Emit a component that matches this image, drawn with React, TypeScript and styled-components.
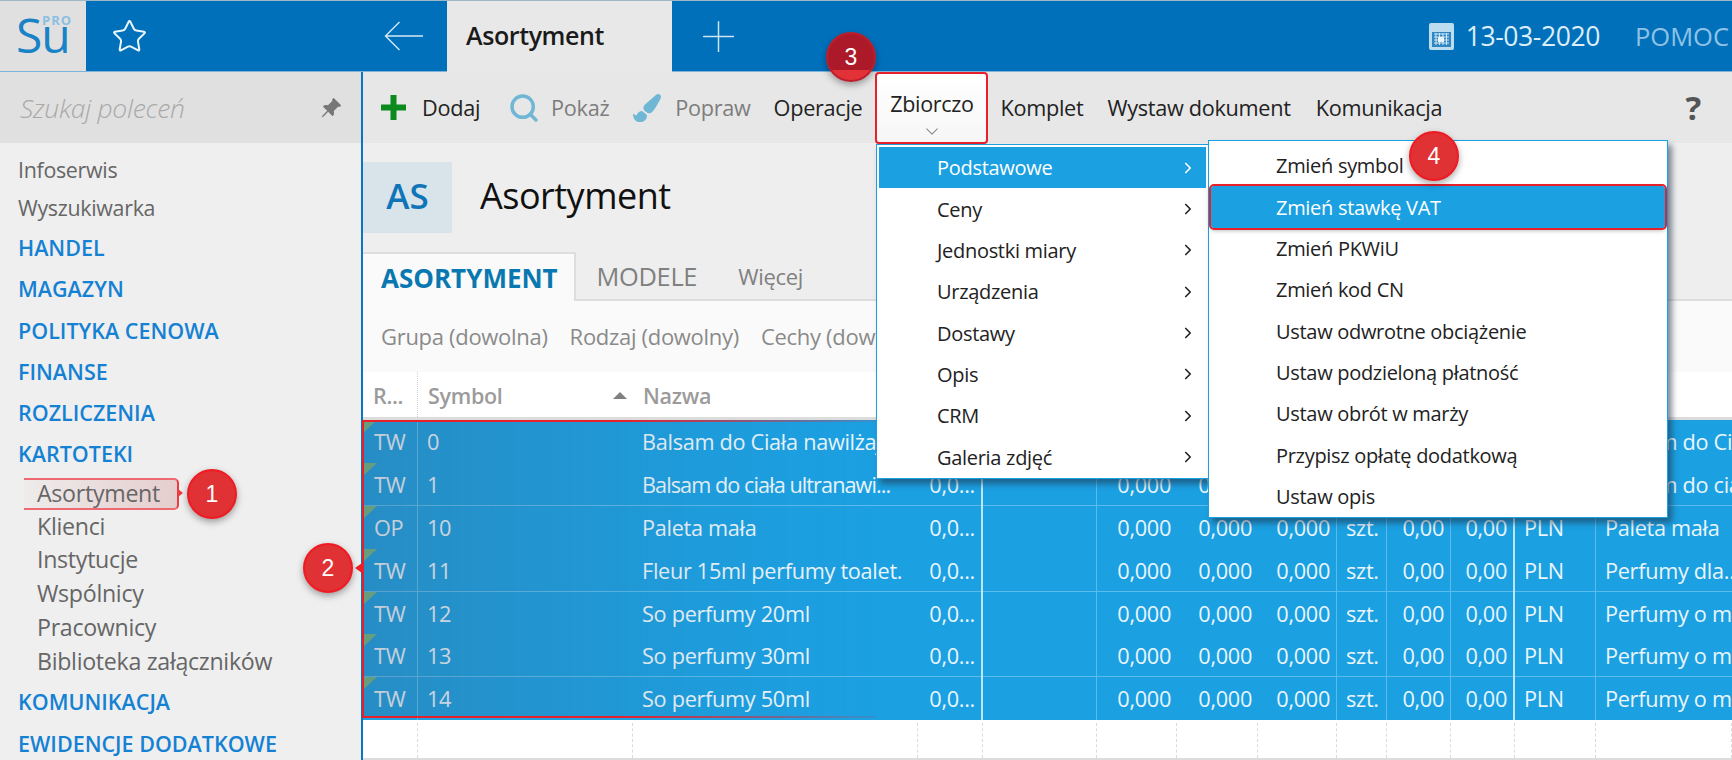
import React from "react";
import styled, { createGlobalStyle } from "styled-components";
import { Star, Search, Plus, ChevronDown, ChevronRight } from "lucide-react";
import { BsPinAngleFill } from "react-icons/bs";
import { FaPaintBrush } from "react-icons/fa";

const GlobalStyle = createGlobalStyle`
  html, body {
    margin: 0;
    padding: 0;
    background: #fff;
  }
  body {
    font-family: "Open Sans", "Liberation Sans", sans-serif;
    overflow: hidden;
  }
`;

const Page = styled.div`
  position: relative;
  width: 1732px;
  height: 760px;
  overflow: hidden;
  display: flex;
  flex-direction: column;
  font-size: 19px;
  letter-spacing: -0.3px;
`;

/* top bar */
const TopBar = styled.header`
  height: 72px;
  flex: none;
  display: flex;
  align-items: stretch;
  background: #0070bb;
  border-top: 1px solid #9fb8c8;
  border-bottom: 1px solid #7fb4da;
  box-sizing: border-box;
  color: #fff;
`;

const LogoBox = styled.div`
  width: 86px;
  background: #e0e0e0;
  position: relative;
  display: flex;
  padding: 5px 0 0 16px;
  box-sizing: border-box;
`;

const LogoSu = styled.span`
  font-size: 48px;
  line-height: 58px;
  font-weight: 500;
  color: #1a82c6;
  letter-spacing: -1px;
`;

const LogoPro = styled.span`
  position: absolute;
  left: 42px;
  top: 12px;
  font-size: 13px;
  line-height: 14px;
  font-weight: 700;
  letter-spacing: 1px;
  color: #8dbfe0;
`;

const FavArea = styled.div`
  width: 361px;
  display: flex;
  align-items: center;
  justify-content: space-between;
  padding: 0 24px 0 25px;
  box-sizing: border-box;
`;

const ActiveTab = styled.div`
  width: 225px;
  background: #e8e8e8;
  margin-bottom: -1px;
  color: #1a1a1a;
  font-size: 25px;
  font-weight: 600;
  line-height: 69px;
  padding-left: 19px;
  box-sizing: border-box;
  letter-spacing: -0.4px;
`;

const NewTab = styled.div`
  display: flex;
  align-items: center;
  padding-left: 21px;
  color: #cfe4f3;
`;

const TopRight = styled.div`
  margin-left: auto;
  display: flex;
  align-items: center;
  white-space: nowrap;
  margin-right: 3px;
`;

const DateText = styled.span`
  font-size: 26.5px;
  color: #dceefa;
  margin-left: 12px;
  letter-spacing: -0.4px;
`;

const HelpLink = styled.span`
  font-size: 25.5px;
  color: #8fc2e5;
  margin-left: 35px;
  letter-spacing: 0;
`;

/* body */
const Body = styled.div`
  flex: 1;
  display: flex;
  min-height: 0;
`;

const Sidebar = styled.aside`
  width: 363px;
  flex: none;
  background: #efefef;
  border-right: 2px solid #0a76bd;
  box-sizing: border-box;
`;

const SearchBox = styled.div`
  height: 71px;
  background: #e0e0e0;
  display: flex;
  align-items: center;
  justify-content: space-between;
  padding: 1px 19px 0 20px;
  color: #a9a9a9;
  font-style: italic;
  font-size: 26.5px;
  font-weight: 300;
  box-sizing: border-box;
`;

const NavList = styled.nav`
  display: flex;
  flex-direction: column;
  padding: 8px 0 0 18px;
`;

const NavLink = styled.div`
  height: 38px;
  line-height: 38px;
  color: #666;
  font-size: 21.4px;
  white-space: nowrap;
`;

const NavGroup = styled.div`
  height: 41.3px;
  line-height: 41.3px;
  color: #1581d3;
  font-size: 21.5px;
  font-weight: 600;
  letter-spacing: 0;
  white-space: nowrap;
`;

const SubList = styled.div`
  display: flex;
  flex-direction: column;
  padding: 35px 0 3px 19px;
`;

const SubLink = styled.div`
  height: 33.7px;
  line-height: 33.7px;
  color: #666;
  font-size: 23.2px;
  white-space: nowrap;
`;

const Main = styled.main`
  flex: 1;
  min-width: 0;
  display: flex;
  flex-direction: column;
  background: #eeeeee;
`;

const Toolbar = styled.div`
  height: 71px;
  flex: none;
  display: flex;
  align-items: center;
  background: #e7e7e7;
  padding-left: 18px;
  position: relative;
`;

const ToolButton = styled.div<{ $muted?: boolean; $gap?: number; $iconGap?: number }>`
  display: flex;
  align-items: center;
  gap: ${(p) => p.$iconGap ?? 16}px;
  color: ${(p) => (p.$muted ? "#7d7d7d" : "#222")};
  margin-right: ${(p) => p.$gap ?? 24}px;
  white-space: nowrap;
  font-size: 21.7px;
`;

const OpenButton = styled.div`
  width: 113px;
  height: 72px;
  margin: 0 12px 0 -11px;
  box-sizing: border-box;
  background: linear-gradient(#ffffff, #f6f6f6);
  border: 2px solid #e8202a;
  border-radius: 4px;
  color: #222;
  display: flex;
  flex-direction: column;
  align-items: center;
  padding-top: 15px;
  font-size: 21.5px;
  white-space: nowrap;
  z-index: 3;
  svg {
    color: #888;
    margin-top: 3px;
  }
`;

const HelpMark = styled.div`
  margin-left: auto;
  margin-right: 31px;
  font-size: 33px;
  font-weight: 700;
  color: #555;
`;

const TitleRow = styled.div`
  height: 109px;
  flex: none;
  display: flex;
  align-items: center;
  gap: 28px;
`;

const TitleBadge = styled.div`
  width: 89px;
  height: 71px;
  background: #d8e3ea;
  color: #0f75b8;
  font-size: 35px;
  font-weight: 600;
  display: flex;
  align-items: center;
  justify-content: center;
  letter-spacing: 0;
  padding-bottom: 4px;
  box-sizing: border-box;
`;

const TitleText = styled.h1`
  margin: -4px 0 0;
  font-size: 36px;
  font-weight: 400;
  color: #111;
  letter-spacing: -0.5px;
`;

const TabStrip = styled.div`
  height: 49px;
  flex: none;
  display: flex;
  align-items: stretch;
  border-bottom: 2px solid #dedede;
  box-sizing: border-box;
`;

const MainTab = styled.div<{ $active?: boolean; $small?: boolean }>`
  display: flex;
  align-items: center;
  padding: 0 ${(p) => (p.$active ? "18px" : "20.5px")};
  font-size: ${(p) => (p.$active ? "26px" : p.$small ? "22px" : "25.4px")};
  font-weight: ${(p) => (p.$active ? 700 : 400)};
  letter-spacing: ${(p) => (p.$active ? "0" : "-0.3px")};
  color: ${(p) => (p.$active ? "#0a78b0" : "#808080")};
  background: ${(p) => (p.$active ? "#fafafa" : "transparent")};
  border-top: ${(p) => (p.$active ? "2px solid #dedede" : "none")};
  border-right: ${(p) => (p.$active ? "2px solid #dedede" : "none")};
  margin-bottom: ${(p) => (p.$active ? "-2px" : "0")};
  width: ${(p) => (p.$active ? "213px" : "auto")};
  box-sizing: border-box;
  white-space: nowrap;
`;

const FilterBar = styled.div`
  height: 71px;
  flex: none;
  background: #fafafa;
  display: flex;
  align-items: center;
  gap: 22px;
  padding: 0 0 2px 18px;
  box-sizing: border-box;
  color: #8a8a8a;
  font-size: 22px;
  white-space: nowrap;
`;

/* grid */
const COLUMNS = "55px 215px 285px 65px 114px 80px 81px 79px 50px 64px 64px 81px 1fr";

const GridHeader = styled.div`
  height: 48px;
  flex: none;
  display: grid;
  grid-template-columns: ${COLUMNS};
  background: #fff;
  border-bottom: 3px solid #dcdcdc;
  box-sizing: border-box;
  align-items: stretch;
  color: #9b9b9b;
  font-weight: 600;
  font-size: 21.5px;
`;

const HeaderCell = styled.div<{ $dashed?: boolean }>`
  display: flex;
  align-items: center;
  justify-content: space-between;
  padding: 1px 10px 0;
  border-right: ${(p) => (p.$dashed ? "1px dotted #d0d0d0" : "none")};
  white-space: nowrap;
`;

const SortMark = styled.span`
  width: 0;
  height: 0;
  border-left: 7px solid transparent;
  border-right: 7px solid transparent;
  border-bottom: 7px solid #808080;
  margin-right: -4px;
`;

const GridRow = styled.div<{ $sep?: boolean }>`
  height: 42.9px;
  flex: none;
  display: grid;
  grid-template-columns: ${COLUMNS};
  background: #1ba0e2;
  color: #eaf5fc;
  font-size: 21.7px;
  box-sizing: border-box;
  box-shadow: ${(p) => (p.$sep ? "inset 0 -1px 0 #5cbbea" : "none")};
`;

const Cell = styled.div<{ $right?: boolean; $line?: "thin" | "thick"; $mark?: boolean; $tight?: boolean; $pad?: number }>`
  position: relative;
  line-height: 44px;
  padding: 0 ${(p) => (p.$right ? "6px" : "0")} 0 ${(p) => (p.$right ? 0 : p.$pad ?? 9)}px;
  text-align: ${(p) => (p.$right ? "right" : "left")};
  white-space: nowrap;
  overflow: hidden;
  letter-spacing: ${(p) => (p.$tight ? "-0.95px" : "-0.3px")};
  border-right: ${(p) =>
    p.$line === "thick" ? "2px solid #bfe5f8" : p.$line === "thin" ? "1px solid #5cbbea" : "none"};
  box-sizing: border-box;
  &::before {
    content: "";
    display: ${(p) => (p.$mark ? "block" : "none")};
    position: absolute;
    left: 0;
    top: 0;
    border-top: 13px solid #6fb583;
    border-right: 14px solid transparent;
  }
`;

const EmptyRow = styled.div`
  height: 38px;
  flex: none;
  display: grid;
  grid-template-columns: ${COLUMNS};
  background: #fff;
  border-bottom: 3px solid #dcdcdc;
  box-sizing: content-box;
`;

const EmptyCell = styled.div`
  border-right: 1px dashed #dadada;
  margin-top: 3px;
`;

/* dropdown menus */
const Menu = styled.div<{ $left: number; $top: number; $width: number; $z: number; $padTop: number }>`
  position: absolute;
  left: ${(p) => p.$left}px;
  top: ${(p) => p.$top}px;
  width: ${(p) => p.$width}px;
  background: #fff;
  border: 1px solid #1ba0e2;
  box-sizing: border-box;
  padding: ${(p) => p.$padTop}px 2px 0;
  z-index: ${(p) => p.$z};
  box-shadow: 4px 5px 6px rgba(30, 50, 70, 0.55);
  font-size: 20px;
  color: #222;
`;

const MenuItem = styled.div<{ $active?: boolean; $outlined?: boolean; $pad: number }>`
  height: 41.35px;
  line-height: 41px;
  box-sizing: border-box;
  padding-left: ${(p) => p.$pad}px;
  padding-right: 9px;
  display: flex;
  align-items: center;
  justify-content: space-between;
  white-space: nowrap;
  background: ${(p) => (p.$active ? "#1ba0e2" : "transparent")};
  color: ${(p) => (p.$active ? "#fff" : "#222")};
  outline: ${(p) => (p.$outlined ? "2px solid #e8202a" : "none")};
  border-radius: ${(p) => (p.$outlined ? "3px" : "0")};
  box-shadow: ${(p) => (p.$outlined ? "0 2px 5px rgba(0, 0, 0, 0.35)" : "none")};
`;

/* annotations */
const RowsHighlight = styled.div`
  position: absolute;
  left: 362px;
  top: 420px;
  width: 514px;
  height: 298px;
  box-sizing: border-box;
  border: 2px solid #e8202a;
  border-image: linear-gradient(to right, #e8202a 50%, rgba(232, 32, 42, 0.1)) 1;
  border-right: none;
  background: linear-gradient(to right, rgba(75, 85, 110, 0.25), rgba(75, 85, 110, 0.05) 70%, transparent);
  pointer-events: none;
`;

const RowsPointer = styled.div`
  position: absolute;
  left: 355px;
  top: 563px;
  border-top: 5px solid transparent;
  border-bottom: 5px solid transparent;
  border-right: 7px solid #e8202a;
`;

const NavCallout = styled.div`
  position: absolute;
  left: 24px;
  top: 478px;
  width: 155px;
  height: 32px;
  box-sizing: border-box;
  border: 2px solid #ee3b42;
  border-left: none;
  border-top-color: #ee6a70;
  border-bottom-color: #ee6a70;
  border-radius: 0 5px 5px 0;
  background: linear-gradient(to right, rgba(190, 70, 70, 0.02), rgba(190, 70, 70, 0.2));
  color: #666;
  font-size: 23.2px;
  line-height: 26px;
  padding-left: 13px;
  white-space: nowrap;
  &::after {
    content: "";
    position: absolute;
    right: -6px;
    top: 9px;
    border-top: 4px solid transparent;
    border-bottom: 4px solid transparent;
    border-left: 5px solid #ee3b42;
  }
`;

const Marker = styled.div<{ $x: number; $y: number; $dark?: boolean }>`
  position: absolute;
  left: ${(p) => p.$x - 25}px;
  top: ${(p) => p.$y - 25}px;
  width: 50px;
  height: 50px;
  border-radius: 50%;
  border: 2px solid ${(p) => (p.$dark ? "#bb1f2d" : "#f01b22")};
  box-sizing: border-box;
  background: ${(p) => (p.$dark ? "linear-gradient(#ac1a29 0 78%, #e23238 78%)" : "#e03135")};
  color: #fff;
  font-family: "Liberation Sans", Arial, sans-serif;
  font-size: 23px;
  letter-spacing: 0;
  display: flex;
  align-items: center;
  justify-content: center;
  box-shadow: 0 3px 7px rgba(0, 0, 0, 0.35);
  z-index: 10;
`;

function CalendarIcon() {
  return (
    <svg width="25" height="27" viewBox="0 0 25 27">
      <rect x="0" y="0" width="25" height="27" rx="2" fill="#bcdcf0" />
      <rect x="3" y="9" width="19" height="15" fill="#2f86c3" />
      <path d="M5 11h15M5 14h15M5 17h15M5 20h15M7 10v12M10.5 10v12M14 10v12M17.5 10v12" stroke="#cfe6f5" strokeWidth="1" />
      <rect x="9" y="14" width="6" height="5" fill="#e8f4fb" />
    </svg>
  );
}

function BackArrow() {
  return (
    <svg width="39" height="30" viewBox="0 0 39 30" fill="none" stroke="#d5e8f5" strokeWidth="1.4">
      <path d="M39 15H1.5M15.5 1L1.5 15l14 14" />
    </svg>
  );
}

const PLUS_GREEN = "#0b8a1e";

const navTop = ["Infoserwis", "Wyszukiwarka"];
const groupsBefore = ["HANDEL", "MAGAZYN", "POLITYKA CENOWA", "FINANSE", "ROZLICZENIA", "KARTOTEKI"];
const subItems = ["Klienci", "Instytucje", "Wspólnicy", "Pracownicy", "Biblioteka załączników"];
const groupsAfter = ["KOMUNIKACJA", "EWIDENCJE DODATKOWE"];

const rows = [
  { type: "TW", sym: "0", name: "Balsam do Ciała nawilżający", desc: "Balsam do Ciała", sep: false },
  { type: "TW", sym: "1", name: "Balsam do ciała ultranawi...", desc: "Balsam do ciała", sep: true, tight: true },
  { type: "OP", sym: "10", name: "Paleta mała", desc: "Paleta mała", sep: false },
  { type: "TW", sym: "11", name: "Fleur 15ml perfumy toalet.", desc: "Perfumy dla...", sep: true },
  { type: "TW", sym: "12", name: "So perfumy 20ml", desc: "Perfumy o mocnym", sep: false },
  { type: "TW", sym: "13", name: "So perfumy 30ml", desc: "Perfumy o mocnym", sep: true },
  { type: "TW", sym: "14", name: "So perfumy 50ml", desc: "Perfumy o mocnym", sep: false },
];

const menuOne = ["Podstawowe", "Ceny", "Jednostki miary", "Urządzenia", "Dostawy", "Opis", "CRM", "Galeria zdjęć"];
const menuTwo = [
  "Zmień symbol",
  "Zmień stawkę VAT",
  "Zmień PKWiU",
  "Zmień kod CN",
  "Ustaw odwrotne obciążenie",
  "Ustaw podzieloną płatność",
  "Ustaw obrót w marży",
  "Przypisz opłatę dodatkową",
  "Ustaw opis",
];

export default function App(): React.ReactElement {
  return (
    <Page>
      <GlobalStyle />
      <TopBar>
        <LogoBox>
          <LogoSu>Su</LogoSu>
          <LogoPro>PRO</LogoPro>
        </LogoBox>
        <FavArea>
          <Star size={37} strokeWidth={1.3} color="#eaf5fc" />
          <BackArrow />
        </FavArea>
        <ActiveTab>Asortyment</ActiveTab>
        <NewTab>
          <Plus size={51} strokeWidth={0.7} />
        </NewTab>
        <TopRight>
          <CalendarIcon />
          <DateText>13-03-2020</DateText>
          <HelpLink>POMOC</HelpLink>
        </TopRight>
      </TopBar>

      <Body>
        <Sidebar>
          <SearchBox>
            Szukaj poleceń
            <BsPinAngleFill size={22} color="#777" />
          </SearchBox>
          <NavList>
            {navTop.map((n) => (
              <NavLink key={n}>{n}</NavLink>
            ))}
            {groupsBefore.map((g) => (
              <NavGroup key={g}>{g}</NavGroup>
            ))}
            <SubList>
              {subItems.map((n) => (
                <SubLink key={n}>{n}</SubLink>
              ))}
            </SubList>
            {groupsAfter.map((g) => (
              <NavGroup key={g}>{g}</NavGroup>
            ))}
          </NavList>
        </Sidebar>

        <Main>
          <Toolbar>
            <ToolButton $gap={28}>
              <svg width="25" height="25" viewBox="0 0 25 25">
                <path d="M9.5 0h6v9.5H25v6h-9.5V25h-6v-9.5H0v-6h9.5z" fill={PLUS_GREEN} />
              </svg>
              Dodaj
            </ToolButton>
            <ToolButton $muted $gap={24} $iconGap={11}>
              <Search size={32} strokeWidth={2.6} color="#70b6d5" />
              Pokaż
            </ToolButton>
            <ToolButton $muted $gap={23} $iconGap={14}>
              <FaPaintBrush size={28} color="#70b6d5" />
              Popraw
            </ToolButton>
            <ToolButton>Operacje</ToolButton>
            <OpenButton>
              Zbiorczo
              <ChevronDown size={22} strokeWidth={1.2} />
            </OpenButton>
            <ToolButton>Komplet</ToolButton>
            <ToolButton $gap={25}>Wystaw dokument</ToolButton>
            <ToolButton>Komunikacja</ToolButton>
            <HelpMark>?</HelpMark>
          </Toolbar>

          <TitleRow>
            <TitleBadge>AS</TitleBadge>
            <TitleText>Asortyment</TitleText>
          </TitleRow>

          <TabStrip>
            <MainTab $active>ASORTYMENT</MainTab>
            <MainTab>MODELE</MainTab>
            <MainTab $small>Więcej</MainTab>
          </TabStrip>

          <FilterBar>
            <span>Grupa (dowolna)</span>
            <span>Rodzaj (dowolny)</span>
            <span>Cechy (dowolne)</span>
          </FilterBar>

          <GridHeader>
            <HeaderCell $dashed>R...</HeaderCell>
            <HeaderCell>
              Symbol
              <SortMark />
            </HeaderCell>
            <HeaderCell>Nazwa</HeaderCell>
          </GridHeader>

          {rows.map((r) => (
            <GridRow key={r.sym} $sep={r.sep}>
              <Cell $line="thin" $mark $pad={11}>
                {r.type}
              </Cell>
              <Cell>{r.sym}</Cell>
              <Cell $tight={r.tight}>{r.name}</Cell>
              <Cell $right $line="thick">
                0,0...
              </Cell>
              <Cell $line="thin" />
              <Cell $right>0,000</Cell>
              <Cell $right>0,000</Cell>
              <Cell $right $line="thin">
                0,000
              </Cell>
              <Cell $line="thin">szt.</Cell>
              <Cell $right $line="thin">
                0,00
              </Cell>
              <Cell $right $line="thick">
                0,00
              </Cell>
              <Cell $line="thin">PLN</Cell>
              <Cell>{r.desc}</Cell>
            </GridRow>
          ))}

          <EmptyRow>
            {Array.from({ length: 13 }).map((_, i) => (
              <EmptyCell key={i} />
            ))}
          </EmptyRow>
        </Main>
      </Body>

      <RowsHighlight />
      <RowsPointer />
      <NavCallout>Asortyment</NavCallout>

      <Menu $left={876} $top={144} $width={333} $z={4} $padTop={2}>
        {menuOne.map((m, i) => (
          <MenuItem key={m} $active={i === 0} $pad={58}>
            {m}
            <ChevronRight size={18} strokeWidth={2.2} />
          </MenuItem>
        ))}
      </Menu>

      <Menu $left={1208} $top={140} $width={460} $z={5} $padTop={4}>
        {menuTwo.map((m, i) => (
          <MenuItem key={m} $active={i === 1} $outlined={i === 1} $pad={65}>
            {m}
          </MenuItem>
        ))}
      </Menu>

      <Marker $x={212} $y={494}>1</Marker>
      <Marker $x={328} $y={568}>2</Marker>
      <Marker $x={851} $y={57} $dark>3</Marker>
      <Marker $x={1434} $y={156}>4</Marker>
    </Page>
  );
}
